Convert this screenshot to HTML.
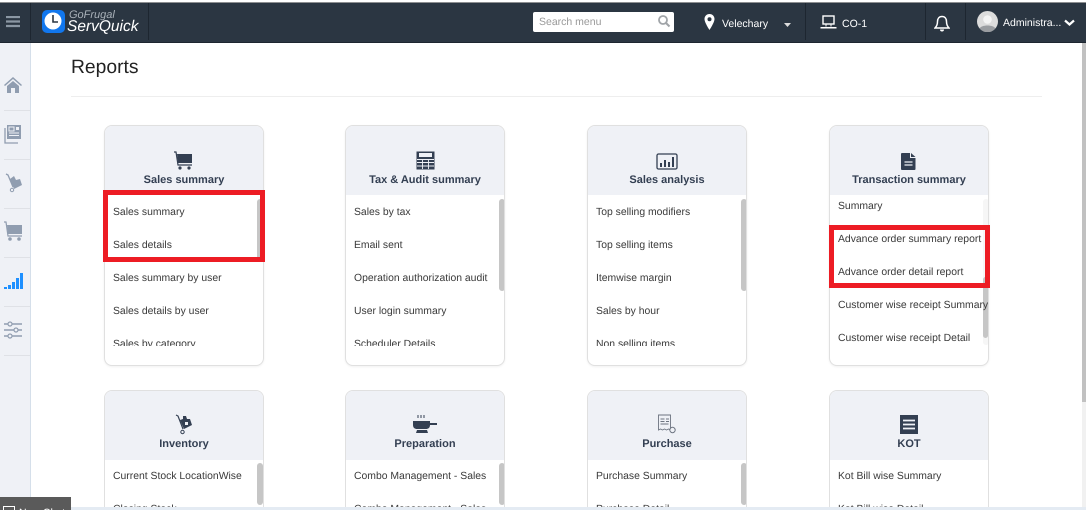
<!DOCTYPE html>
<html><head><meta charset="utf-8"><style>
*{box-sizing:border-box;margin:0;padding:0}
html,body{width:1086px;height:510px;overflow:hidden;background:#fff;font-family:"Liberation Sans",sans-serif;text-rendering:geometricPrecision}
#wrap{position:relative;width:1086px;height:510px;overflow:hidden}
.a{position:absolute}
#hdr{left:0;top:2px;width:1086px;height:41px;background:#2b3642;border-bottom:1px solid #1d2630;border-top:1px solid #8d8f91}
.sep{position:absolute;top:3px;height:37px;width:1px;background:#1d2630}
#side{left:0;top:43px;width:31px;height:467px;background:#eff1f6;border-right:1px solid #d5dfea}
.sl{position:absolute;left:4px;width:26px;height:1px;background:#dfe1e6}
.card{position:absolute;width:160px;height:241px;border:1px solid #e0e0e0;border-radius:8px;background:#fff;overflow:hidden;box-shadow:0 1px 2px rgba(0,0,0,.06)}
.card.b{height:120px;border-bottom:0;border-radius:8px 8px 0 0;box-shadow:none}
.ch{position:absolute;left:0;top:0;width:100%;height:69px;background:#eff1f6}
.ct{position:absolute;left:0;width:100%;top:47px;text-align:center;font-size:11px;font-weight:bold;color:#333f52;line-height:14px}
.r{position:absolute;left:8px;font-size:10.4px;color:#3a3a3a;white-space:nowrap;line-height:14px}
.clip{position:absolute;left:0;top:69px;width:158px;height:151px;overflow:hidden}
.b .clip{height:50px}
.th{position:absolute;width:6px;background:#c6c6c6;border-radius:3px}
.tk{position:absolute;width:6px;background:#f6f6f6;border-radius:3px}
.red{position:absolute;border:5px solid #ed1c24}
svg{position:absolute;display:block}
</style></head><body><div id="wrap">
<div class="a" id="hdr"></div>
<div class="sep" style="left:30px"></div><div class="sep" style="left:148px"></div>
<div class="sep" style="left:805px"></div><div class="sep" style="left:925px"></div><div class="sep" style="left:965px"></div>
<svg style="left:6px;top:16px" width="14" height="12"><path d="M0 1h14M0 5.500h14M0 10h14" stroke="#8b97a3" stroke-width="2.200"/></svg>
<svg style="left:41px;top:9px" width="25" height="25" viewBox="0 0 25 25"><rect x="1" y="1" width="23" height="23" rx="5" fill="#1177ee"/><circle cx="12" cy="12" r="8.500" fill="#fff"/><path d="M12 6v7h5" stroke="#2b3642" stroke-width="1.600" fill="none"/></svg>
<div class="a" style="left:69px;top:9px;font-size:11px;font-style:italic;color:#aab2ba;line-height:12px">GoFrugal</div>
<div class="a" style="left:67px;top:17px;font-size:15.500px;font-style:italic;color:#fff;line-height:20px">ServQuick</div>
<div class="a" style="left:533px;top:12px;width:141px;height:20px;background:#fff;border-radius:2px;font-size:10.500px;color:#999;line-height:20px;padding-left:6px">Search menu</div>
<svg style="left:657px;top:14px" width="14" height="14"><circle cx="6" cy="6" r="4" fill="none" stroke="#a0a4a8" stroke-width="1.800"/><path d="M9 9l3.500 3.500" stroke="#a0a4a8" stroke-width="2"/></svg>
<svg style="left:703px;top:13px" width="13" height="18" viewBox="0 0 13 18"><path fill-rule="evenodd" d="M6.500 1C3.500 1 1.500 3.300 1.500 6c0 3.500 5 11 5 11s5-7.500 5-11c0-2.700-2-5-5-5zm0 3.200a2 2 0 1 1 0 4 2 2 0 0 1 0-4z" fill="#fff"/></svg>
<div class="a" style="left:722px;top:17px;font-size:10.500px;color:#fff;line-height:14px">Velechary</div>
<svg style="left:784px;top:23px" width="8" height="5"><path d="M0 0h7L3.500 4z" fill="#ddd"/></svg>
<svg style="left:820px;top:15px" width="18" height="15" viewBox="0 0 18 15"><rect x="3" y="1" width="11" height="8" fill="none" stroke="#fff" stroke-width="1.400"/><path d="M6 9.500v2M11 9.500v2" stroke="#fff"/><path d="M.5 12h16v1.500H.5z" fill="#fff"/></svg>
<div class="a" style="left:842px;top:17px;font-size:10.500px;color:#fff;line-height:14px">CO-1</div>
<svg style="left:934px;top:15px" width="16" height="18" viewBox="0 0 16 18"><path d="M8 1.500c-3 0-4.500 2.200-4.500 5 0 3.500-1 5-2.500 6.500h14c-1.500-1.500-2.500-3-2.500-6.500 0-2.800-1.500-5-4.500-5z" fill="none" stroke="#fff" stroke-width="1.500"/><path d="M6 14.500a2 2 0 0 0 4 0z" fill="#fff"/></svg>
<svg style="left:977px;top:11px" width="21" height="21" viewBox="0 0 21 21"><circle cx="10.500" cy="10.500" r="10.500" fill="#dcdcdc"/><circle cx="10.500" cy="8.500" r="4.300" fill="#f4f4f4"/><path d="M2.500 17.500c2-4 14-4 16 0a10.500 10.500 0 0 1-16 0z" fill="#9a9da1"/></svg>
<div class="a" style="left:1003px;top:16px;font-size:10.500px;color:#fff;line-height:14px">Administra...</div>
<svg style="left:1064px;top:19px" width="11" height="8"><path d="M1 1.500l4.500 4 4.500-4" fill="none" stroke="#fff" stroke-width="2.200"/></svg>

<div class="a" id="side">
<div class="sl" style="top:67px"></div><div class="sl" style="top:116px"></div><div class="sl" style="top:165px"></div><div class="sl" style="top:214px"></div><div class="sl" style="top:263px"></div><div class="sl" style="top:312px"></div>
</div>
<svg style="left:4px;top:77px" width="18" height="16" viewBox="0 0 18 16"><path d="M0 8L9 0l9 8-1 1-8-7-8 7z M3 9l6-5 6 5v7h-4v-5H7v5H3z" fill="#909db0"/></svg>
<svg style="left:4px;top:124px" width="18" height="20" viewBox="0 0 18 20"><path d="M3 1h14v14H3z" fill="#909db0"/><path d="M1 4v15h13" fill="none" stroke="#909db0" stroke-width="1.300"/><path d="M5 3h5v4H5zM5 9h10M5 11.500h10" stroke="#eff1f6" fill="none"/><rect x="12" y="3" width="3" height="3" fill="#eff1f6"/></svg>
<svg style="left:5px;top:173px" width="17" height="20" viewBox="0 0 17 20"><path d="M1 1l2 1 5 12" fill="none" stroke="#909db0" stroke-width="1.300"/><circle cx="7" cy="17" r="1.700" fill="none" stroke="#909db0"/><path d="M5 6l4-3 2 4 4-1 2 6-8 4z" fill="#909db0"/></svg>
<svg style="left:4px;top:221px" width="19" height="21" viewBox="0 0 19 21"><path d="M0 1h2l2 14h14" fill="none" stroke="#909db0" stroke-width="1.200"/><path d="M3 4h15v9H4z" fill="#909db0"/><circle cx="6" cy="18" r="1.800" fill="#909db0"/><circle cx="15" cy="18" r="1.800" fill="#909db0"/></svg>
<svg style="left:4px;top:272px" width="19" height="18"><path d="M0 15h3v2H0zM4 13h3v4H4zM8 10h3v7H8zM12 6h3v11h-3zM16 1h3v16h-3z" fill="#1e90ff"/></svg>
<svg style="left:4px;top:321px" width="19" height="18" viewBox="0 0 19 18"><path d="M0 3h18M0 9h18M0 15h18" stroke="#909db0" stroke-width="1.500"/><circle cx="6" cy="3" r="2" fill="#eff1f6" stroke="#909db0" stroke-width="1.200"/><circle cx="12" cy="9" r="2" fill="#eff1f6" stroke="#909db0" stroke-width="1.200"/><circle cx="6" cy="15" r="2" fill="#eff1f6" stroke="#909db0" stroke-width="1.200"/></svg>

<div class="a" style="left:71px;top:57px;font-size:19.300px;color:#222;line-height:22px">Reports</div>
<div class="a" style="left:71px;top:96px;width:971px;height:1px;background:#eeeeee"></div>

<!-- row 1 -->
<div class="card" style="left:104px;top:125px"><div class="ch"></div><div class="ct">Sales summary</div>
<div class="clip"><div class="r" style="top:11px">Sales summary</div><div class="r" style="top:44px">Sales details</div><div class="r" style="top:77px">Sales summary by user</div><div class="r" style="top:110px">Sales details by user</div><div class="r" style="top:143px">Sales by category</div></div>
<div class="th" style="left:152px;top:73px;height:62px"></div></div>
<div class="card" style="left:345px;top:125px"><div class="ch"></div><div class="ct">Tax &amp; Audit summary</div>
<div class="clip"><div class="r" style="top:11px">Sales by tax</div><div class="r" style="top:44px">Email sent</div><div class="r" style="top:77px">Operation authorization audit</div><div class="r" style="top:110px">User login summary</div><div class="r" style="top:143px">Scheduler Details</div></div>
<div class="th" style="left:153px;top:73px;height:92px"></div></div>
<div class="card" style="left:587px;top:125px"><div class="ch"></div><div class="ct">Sales analysis</div>
<div class="clip"><div class="r" style="top:11px">Top selling modifiers</div><div class="r" style="top:44px">Top selling items</div><div class="r" style="top:77px">Itemwise margin</div><div class="r" style="top:110px">Sales by hour</div><div class="r" style="top:143px">Non selling items</div></div>
<div class="th" style="left:153px;top:73px;height:92px"></div></div>
<div class="card" style="left:829px;top:125px"><div class="ch"></div><div class="ct">Transaction summary</div>
<div class="tk" style="left:153px;top:73px;height:146px"></div>
<div class="th" style="left:153px;top:151px;height:61px;width:5px"></div>
<div class="clip"><div class="r" style="top:5px">Summary</div><div class="r" style="top:38px">Advance order summary report</div><div class="r" style="top:71px">Advance order detail report</div><div class="r" style="top:104px">Customer wise receipt Summary</div><div class="r" style="top:137px">Customer wise receipt Detail</div></div>
</div>

<!-- row 2 -->
<div class="card b" style="left:104px;top:390px"><div class="ch"></div><div class="ct" style="top:46px">Inventory</div>
<div class="clip"><div class="r" style="top:10px">Current Stock LocationWise</div><div class="r" style="top:43px">Closing Stock</div></div>
<div class="th" style="left:152px;top:72px;height:42px"></div></div>
<div class="card b" style="left:345px;top:390px"><div class="ch"></div><div class="ct" style="top:46px">Preparation</div>
<div class="clip"><div class="r" style="top:10px">Combo Management - Sales</div><div class="r" style="top:43px">Combo Management - Sales</div></div>
<div class="th" style="left:153px;top:72px;height:42px"></div></div>
<div class="card b" style="left:587px;top:390px"><div class="ch"></div><div class="ct" style="top:46px">Purchase</div>
<div class="clip"><div class="r" style="top:10px">Purchase Summary</div><div class="r" style="top:43px">Purchase Detail</div></div>
<div class="th" style="left:153px;top:72px;height:42px"></div></div>
<div class="card b" style="left:829px;top:390px"><div class="ch"></div><div class="ct" style="top:46px">KOT</div>
<div class="clip"><div class="r" style="top:10px">Kot Bill wise Summary</div><div class="r" style="top:43px">Kot Bill wise Detail</div></div></div>

<!-- card icons -->
<svg style="left:174px;top:151px" width="20" height="19" viewBox="0 0 20 19"><path d="M0 1h2l2 13h14" fill="none" stroke="#333f52" stroke-width="1.200"/><path d="M3 3h15v9H4z" fill="#333f52"/><circle cx="6" cy="17" r="1.600" fill="#333f52"/><circle cx="15" cy="17" r="1.600" fill="#333f52"/></svg>
<svg style="left:416px;top:151px" width="19" height="19" viewBox="0 0 19 19"><rect x=".5" y=".5" width="18" height="18" fill="#333f52"/><rect x="3" y="2" width="13" height="4" fill="#eff1f6"/><path d="M1 8.500h17M1 11.500h17M1 15h17M6.500 8v10M12.500 8v10" stroke="#eff1f6" stroke-width=".9"/></svg>
<svg style="left:656px;top:153px" width="22" height="17" viewBox="0 0 22 17"><rect x="1" y="1" width="20" height="15" rx="1.500" fill="none" stroke="#333f52" stroke-width="1.300"/><path d="M4 10h2v4H4zM8 7h2v7H8zM12 9h2v5h-2zM16 4h2v10h-2z" fill="#333f52"/></svg>
<svg style="left:901px;top:153px" width="15" height="17" viewBox="0 0 15 17"><path d="M0 1a1 1 0 0 1 1-1h8v5h5.500v11a1 1 0 0 1-1 1H1a1 1 0 0 1-1-1zM10 0l4.500 4H10z" fill="#333f52"/><path d="M3.500 9h8M3.500 12h8" stroke="#eff1f6" stroke-width="1.200"/></svg>
<svg style="left:175px;top:414px" width="18" height="21" viewBox="0 0 18 21"><path d="M1 1l2 1 5 13" fill="none" stroke="#333f52" stroke-width="1.200"/><circle cx="7.500" cy="18" r="1.700" fill="none" stroke="#333f52"/><path d="M5 6l3-1 0-3 3 0 1 3 3 0 2 6-8 4z" fill="#333f52"/><rect x="10" y="8" width="3" height="3" fill="#eff1f6"/></svg>
<svg style="left:413px;top:414px" width="25" height="21" viewBox="0 0 25 21"><path d="M5 1v3M8 1v3M11 1v3" stroke="#333f52" stroke-width="1"/><path d="M0 7h17v2h7v2h-7c0 3-2 4-4 4H4c-2 0-4-1-4-4z" fill="#333f52"/><path d="M4 16h10l1 3H3z" fill="#333f52"/></svg>
<svg style="left:657px;top:414px" width="20" height="21" viewBox="0 0 20 21"><path d="M1.500 1h12v15l-2-1-2 1-2-1-2 1-2-1-2 1z" fill="none" stroke="#6d7480" stroke-width=".9"/><path d="M3.500 5h4M3.500 7.500h4M3.500 10h8M9 5h3M9 7.500h3" stroke="#6d7480" stroke-width="1"/><circle cx="15.500" cy="16" r="2.700" fill="#eff1f6" stroke="#6d7480"/></svg>
<svg style="left:900px;top:415px" width="18" height="19" viewBox="0 0 18 19"><rect x="0" y="0" width="18" height="19" fill="#333f52"/><path d="M3 5.500h12M3 9.500h12M3 13.500h12" stroke="#eff1f6" stroke-width="1.800"/></svg>

<!-- red boxes -->
<div class="red" style="left:103px;top:190px;width:162px;height:72px"></div>
<div class="red" style="left:829px;top:225px;width:161px;height:63px"></div>

<!-- page scrollbar -->
<div class="a" style="left:1082px;top:43px;width:4px;height:467px;background:#f1f1f1"></div>
<div class="a" style="left:1082px;top:43px;width:4px;height:359px;background:#c1c1c1"></div>

<!-- bottom -->
<div class="a" style="left:31px;top:507px;width:1055px;height:3px;background:#e4ebf3"></div>
<div class="a" style="left:0;top:497px;width:71px;height:13px;background:#5a5a5a;overflow:hidden"><div style="position:absolute;left:3px;top:9px;width:12px;height:4px;border:1px solid #fff;border-bottom:0"></div><div style="position:absolute;left:19px;top:10px;height:3px;overflow:hidden;font-size:10.500px;color:#fff;line-height:12px">New Chat</div></div>
</div></body></html>
